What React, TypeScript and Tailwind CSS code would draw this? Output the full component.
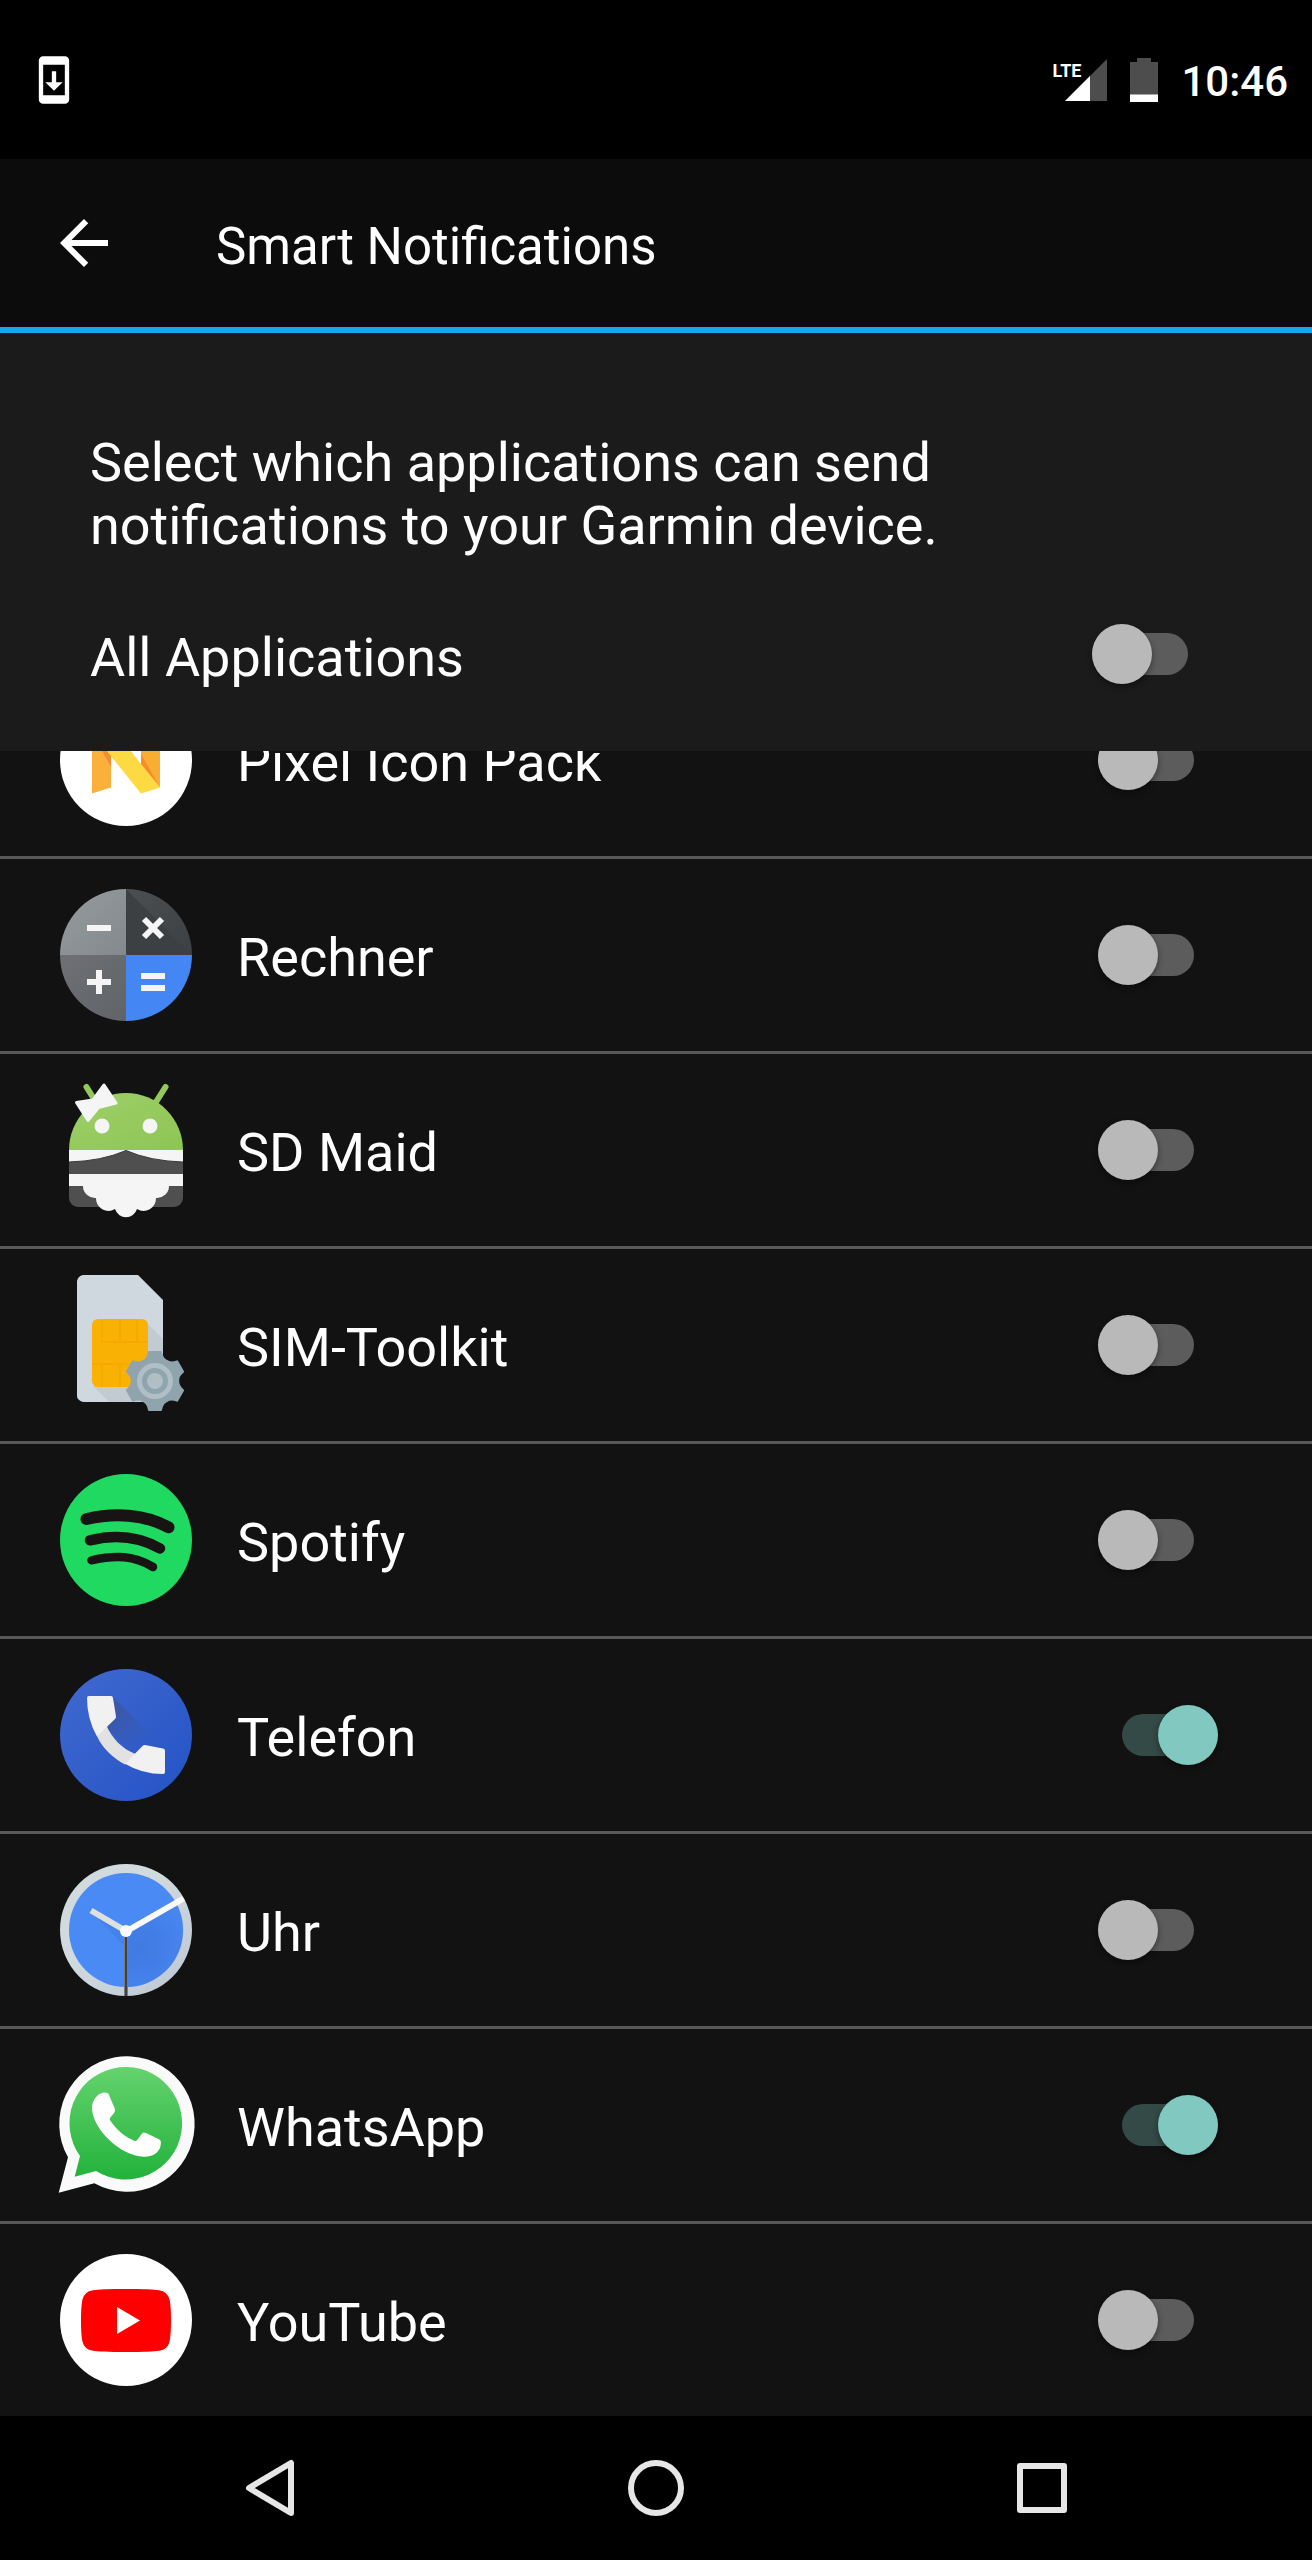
import { useLayoutEffect, useRef, useState } from 'react';
import type { ReactNode } from 'react';

interface AppEntry {
  id: string;
  name: string;
  enabled: boolean;
  icon: ReactNode;
}

function AppIcon({ children }: { children: ReactNode }) {
  return (
    <svg viewBox="0 0 132 132" className="size-[132px] shrink-0 overflow-visible" aria-hidden="true">
      {children}
    </svg>
  );
}

const pixelIcon = (
  <AppIcon>
    <circle cx="66" cy="66" r="66" fill="#fff" />
    <path d="M32 38.5 51 32.5V93.5L32 99.5Z" fill="#fbb03b" />
    <path d="M81 38.5 100 32.5V93.5L81 70Z" fill="#f9ae33" />
    <path d="M32 38.5 51 73V58Z" fill="#f78b2d" />
    <path d="M81 60 100 93.5 81 71Z" fill="#f78b2d" />
    <path d="M32 38.5 51 32.5 100 93.5 81 99.5Z" fill="#fdd942" />
  </AppIcon>
);

const calculatorIcon = (
  <AppIcon>
    <defs>
      <clipPath id="calc-clip">
        <circle cx="66" cy="66" r="66" />
      </clipPath>
      <linearGradient id="calc-minus" x1="0" y1="0" x2="1" y2="1">
        <stop offset="0" stopColor="#969b9e" />
        <stop offset="1" stopColor="#84898d" />
      </linearGradient>
      <linearGradient id="calc-plus" x1="0" y1="0" x2="1" y2="1">
        <stop offset="0" stopColor="#6e7074" />
        <stop offset="1" stopColor="#606367" />
      </linearGradient>
      <linearGradient id="calc-times" x1="0" y1="0" x2="1" y2="1">
        <stop offset="0" stopColor="#4c4f51" />
        <stop offset="1" stopColor="#3c4043" />
      </linearGradient>
    </defs>
    <g clipPath="url(#calc-clip)">
      <rect width="66" height="66" fill="url(#calc-minus)" />
      <rect x="66" width="66" height="66" fill="url(#calc-times)" />
      <path d="M66 0 132 66H66Z" fill="#3c4042" />
      <rect y="66" width="66" height="66" fill="url(#calc-plus)" />
      <rect x="66" y="66" width="66" height="66" fill="#4486f4" />
    </g>
    <g fill="#f5f5f5">
      <rect x="27" y="36" width="24" height="6" />
      <rect x="27" y="90" width="24" height="6" />
      <rect x="36" y="81" width="6" height="24" />
      <rect x="81" y="84" width="24" height="6" />
      <rect x="81" y="96" width="24" height="6" />
    </g>
    <path d="M84 30 102 48M102 30 84 48" stroke="#f5f5f5" strokeWidth="6" />
  </AppIcon>
);

const sdMaidIcon = (
  <AppIcon>
    <defs>
      <linearGradient id="maid-head" x1="0" y1="0" x2="1" y2="1">
        <stop offset="0" stopColor="#9fcf6b" />
        <stop offset="1" stopColor="#8dc653" />
      </linearGradient>
    </defs>
    <path d="M26.5 3 34 15M105.5 3 96 18" stroke="#93c95b" strokeWidth="6" strokeLinecap="round" />
    <path d="M9 66A57 57 0 0 1 123 66Z" fill="url(#maid-head)" />
    <path d="M9 66H123V114A9 9 0 0 1 114 123H18A9 9 0 0 1 9 114Z" fill="#4f4f4f" />
    <path d="M9 66H123V78Q90 77 66 66.5 42 77 9 78Z" fill="#f5f5f5" />
    <path d="M9 78Q42 77 66 66.5 90 77 123 78" fill="none" stroke="#3b3b3b" strokeWidth="1" />
    <path
      d="M9 90H123V102H109A12 12 0 0 1 96 114A12.500 12.500 0 0 1 77 125A11.500 11.500 0 0 1 55 125A12.500 12.500 0 0 1 36 114A12 12 0 0 1 23 102H9Z"
      fill="#f5f5f5"
    />
    <circle cx="42" cy="42" r="7.5" fill="#f5f5f5" />
    <circle cx="90" cy="42" r="7.5" fill="#f5f5f5" />
    <path
      d="M44 1 56 19 38.5 23.5 28 36.500 16.500 18.500 33 16Z"
      fill="#f5f5f5"
      stroke="#f5f5f5"
      strokeWidth="3"
      strokeLinejoin="round"
    />
  </AppIcon>
);

const simIcon = (
  <AppIcon>
    <path d="M23 -4H78L103 21V123H23Q17 121 17 117V2Q18 -3 23 -4Z" fill="#cfd8de" />
    <path d="M88 45 103 60V123H49L33 107H88Z" fill="#c2cbd1" />
    <rect x="32" y="40" width="56" height="68" rx="6" fill="#f9b104" />
    <path d="M42 41V63H88M60 41V63M77 41V63M32 85H88M42 85V108M60 85V108" fill="none" stroke="#f6a900" strokeWidth="2" />
    <g transform="translate(95 102)">
      <circle r="24" fill="#90a4ae" />
      {[0, 60, 120, 180, 240, 300].map((angle) => (
        <path
          key={angle}
          d="M-12 -21Q-8 -23 -7 -29Q-7 -30 -6 -30H6Q7 -30 7 -29Q8 -23 12 -21L8 -14H-8Z"
          fill="#90a4ae"
          transform={`rotate(${angle})`}
        />
      ))}
      <circle r="15.500" fill="none" stroke="#b0bec5" strokeWidth="5" />
      <circle r="8" fill="#b0bec5" />
    </g>
  </AppIcon>
);

const spotifyIcon = (
  <AppIcon>
    <circle cx="66" cy="66" r="66" fill="#1fd961" />
    <g fill="none" stroke="#191414" strokeLinecap="round">
      <path d="M26.500 45C54 38.500 84 40 108.500 53.300" strokeWidth="12" />
      <path d="M30 66.300C54 60.500 79 62.500 100 74.500" strokeWidth="10.500" />
      <path d="M31.500 86.300C56 81 74 81.500 93 93" strokeWidth="8.500" />
    </g>
  </AppIcon>
);

const phoneIcon = (
  <AppIcon>
    <defs>
      <linearGradient id="phone-bg" x1="0" y1="0" x2="1" y2="1">
        <stop offset="0" stopColor="#4169cf" />
        <stop offset="1" stopColor="#2453c6" />
      </linearGradient>
      <linearGradient id="phone-shade" x1="0.2" y1="0.2" x2="0.7" y2="0.7">
        <stop offset="0" stopColor="#3a58a8" />
        <stop offset="1" stopColor="#3a58a8" stopOpacity="0" />
      </linearGradient>
    </defs>
    <circle cx="66" cy="66" r="66" fill="url(#phone-bg)" />
    <path d="M53 28 105 80 75 86 46 58Z" fill="url(#phone-shade)" />
    <path d="M46.700 57C52 69 62 80 75.500 85L65 95.500C53 89 42 79 37 67Z" fill="#e2e2e2" />
    <path d="M29 27H51Q52.700 27 53 29L56 47.500Q56 49 55 50L37 67.500Q27 50 27 29 27 27 29 27Z" fill="#f1f1f1" />
    <path d="M105 103V81.500Q105 80 103 79.500L85 76Q83.500 75.800 82.500 77L65 94.700Q82 105 103 105 105 105 105 103Z" fill="#f1f1f1" />
  </AppIcon>
);

const clockIcon = (
  <AppIcon>
    <defs>
      <linearGradient id="clock-rim" x1="0" y1="0" x2="1" y2="1">
        <stop offset="0.4" stopColor="#d1dadd" />
        <stop offset="0.9" stopColor="#bfcad6" />
      </linearGradient>
      <radialGradient id="clock-shade" gradientUnits="userSpaceOnUse" cx="80" cy="84" r="56">
        <stop offset="0" stopColor="#4079e2" />
        <stop offset="1" stopColor="#4079e2" stopOpacity="0.2" />
      </radialGradient>
    </defs>
    <circle cx="66" cy="66" r="66" fill="url(#clock-rim)" />
    <circle cx="66" cy="66" r="57" fill="#4a8af5" />
    <path d="M66 67 116 38A57 57 0 0 1 66 123Z" fill="url(#clock-shade)" />
    <path d="M32 48 66 84V67Z" fill="#4682ec" />
    <path d="M31 46.500 66 67" stroke="#e0e0e0" strokeWidth="6" />
    <path d="M66 67.500 123.500 34.500" stroke="#fafafa" strokeWidth="6" />
    <path d="M66 73V132" stroke="#757b83" strokeWidth="4" />
    <path d="M66 73V132" stroke="#424242" strokeWidth="2" />
    <circle cx="66" cy="67" r="6" fill="#fafafa" />
  </AppIcon>
);

const whatsAppIcon = (
  <AppIcon>
    <defs>
      <linearGradient id="wa-bg" x1="0" y1="0" x2="0" y2="1">
        <stop offset="0" stopColor="#65d36e" />
        <stop offset="1" stopColor="#22b23b" />
      </linearGradient>
    </defs>
    <path d="M8 98.300A67.700 67.700 0 1 1 34.300 124.300L-1.300 133.700Z" fill="#fafafa" />
    <path d="M20 97A56.300 56.300 0 1 1 36 112L14.700 117.700Z" fill="url(#wa-bg)" />
    <path
      d="M43 33.700C36 35 31.500 43 32 50C33 70 60 97 84 97.800C92 98 99 94 100.500 87C101.200 83 101.200 81.500 99 80.200L86 74C84 73 83 73.300 82 74.500L77.500 80.500C76 82.300 75 82.500 73 81.300C64 77 57 71 50.500 62C49.300 60.200 49.500 59.500 50.800 58L54 54C55.300 52 55.200 51 54.500 49L49 36C48 34 46.500 33.300 43 33.700Z"
      fill="#fff"
    />
  </AppIcon>
);

const youTubeIcon = (
  <AppIcon>
    <circle cx="66" cy="66" r="66" fill="#fff" />
    <path
      d="M66 35C84 35 94 35.300 99 36.200Q108 37.500 109.700 46C110.700 52 111 58 111 66.500S110.700 81 109.700 87Q108 95.500 99 96.800C94 97.700 84 98 66 98S38 97.700 33 96.800Q24 95.500 22.300 87C21.300 81 21 75 21 66.500S21.300 52 22.300 46Q24 37.500 33 36.200C38 35.300 48 35 66 35Z"
      fill="#f00"
    />
    <path d="M57 53 80 66.500 57 80Z" fill="#fff" />
  </AppIcon>
);

const initialApps: AppEntry[] = [
  { id: 'pixel', name: 'Pixel Icon Pack', enabled: false, icon: pixelIcon },
  { id: 'rechner', name: 'Rechner', enabled: false, icon: calculatorIcon },
  { id: 'sdmaid', name: 'SD Maid', enabled: false, icon: sdMaidIcon },
  { id: 'sim', name: 'SIM-Toolkit', enabled: false, icon: simIcon },
  { id: 'spotify', name: 'Spotify', enabled: false, icon: spotifyIcon },
  { id: 'telefon', name: 'Telefon', enabled: true, icon: phoneIcon },
  { id: 'uhr', name: 'Uhr', enabled: false, icon: clockIcon },
  { id: 'whatsapp', name: 'WhatsApp', enabled: true, icon: whatsAppIcon },
  { id: 'youtube', name: 'YouTube', enabled: false, icon: youTubeIcon },
];

interface SwitchProps {
  id: string;
  checked: boolean;
  onChange: (checked: boolean) => void;
}

function Switch({ id, checked, onChange }: SwitchProps) {
  return (
    <input
      id={id}
      type="checkbox"
      role="switch"
      checked={checked}
      onChange={(e) => onChange(e.target.checked)}
      className="mr-6 h-[42px] w-24 shrink-0 appearance-none rounded-full bg-[#5c5c5c] before:-mt-[9px] before:block before:size-[60px] before:rounded-full before:bg-[#b9b9b9] before:shadow-[0_3px_6px_rgba(0,0,0,0.4)] checked:mr-0 checked:ml-6 checked:bg-[#344a47] checked:before:ml-9 checked:before:bg-[#80c8c0]"
    />
  );
}

function StatusBar() {
  return (
    <div className="flex h-[159px] shrink-0 items-center justify-between bg-black pr-6 pl-7">
      <svg viewBox="0 0 24 24" className="size-[52px]" fill="#fff" aria-hidden="true">
        <path d="M17 1H7a2 2 0 0 0-2 2v18a2 2 0 0 0 2 2h10a2 2 0 0 0 2-2V3a2 2 0 0 0-2-2zm0 18H7V5h10v14zm-1-6h-3V8h-2v5H8l4 4 4-4z" />
      </svg>
      <div className="flex items-center gap-[23px]">
        <div className="flex">
          <span className="-mr-4 text-[18px] leading-[24px] font-bold text-white">LTE</span>
          <svg viewBox="0 0 42 42" className="size-[42px]" aria-hidden="true">
            <path d="M42 0V42H0Z" fill="#4d4d4d" />
            <path d="M25 17V42H0Z" fill="#fff" />
          </svg>
        </div>
        <svg viewBox="0 0 28 44" className="h-11 w-7" aria-hidden="true">
          <path d="M7 0H21V4H28V44H0V4H7Z" fill="#4d4d4d" />
          <path d="M0 36.500H28V44H0Z" fill="#fff" />
        </svg>
        <span className="pt-1 text-[42px] leading-[50px] font-medium text-white">10:46</span>
      </div>
    </div>
  );
}

function NavBar() {
  return (
    <nav className="flex h-36 shrink-0 items-center bg-black px-[77px]">
      <button type="button" aria-label="Back" className="flex flex-1 justify-center">
        <svg viewBox="0 0 60 60" className="size-[60px]" fill="none" stroke="#e6e6e6" strokeWidth="6" strokeLinejoin="round">
          <path d="M51 5V55L9 30Z" />
        </svg>
      </button>
      <button type="button" aria-label="Home" className="flex flex-1 justify-center">
        <svg viewBox="0 0 60 60" className="size-[60px]" fill="none" stroke="#e6e6e6" strokeWidth="6">
          <circle cx="30" cy="30" r="25" />
        </svg>
      </button>
      <button type="button" aria-label="Overview" className="flex flex-1 justify-center">
        <svg viewBox="0 0 60 60" className="size-[60px]" fill="none" stroke="#e6e6e6" strokeWidth="6" strokeLinejoin="round">
          <path d="M8 8H52V52H8Z" />
        </svg>
      </button>
    </nav>
  );
}

export default function App() {
  const [apps, setApps] = useState(initialApps);
  const listRef = useRef<HTMLUListElement>(null);

  // Open at the end of the list
  useLayoutEffect(() => {
    if (listRef.current) {
      listRef.current.scrollTop = listRef.current.scrollHeight;
    }
  }, []);

  const toggleApp = (id: string, enabled: boolean) => {
    setApps(apps.map((app) => (app.id === id ? { ...app, enabled } : app)));
  };

  const toggleAll = (enabled: boolean) => {
    setApps(apps.map((app) => ({ ...app, enabled })));
  };

  return (
    <div className="flex h-screen flex-col bg-[#121212] font-['Roboto',sans-serif] text-[54px] leading-[63px] text-white">
      <StatusBar />

      <header className="flex h-[174px] shrink-0 items-center border-b-6 border-[#11a8ed] bg-[#0c0c0c] pl-12">
        <button type="button" aria-label="Navigate up">
          <svg viewBox="0 0 24 24" className="size-[72px]" fill="#fff">
            <path d="M20 11H7.830l5.590-5.590L12 4l-8 8 8 8 1.410-1.410L7.830 13H20v-2z" />
          </svg>
        </button>
        <h1 className="ml-24 pt-1.5 text-[51px]">Smart Notifications</h1>
      </header>

      <section className="shrink-0 bg-[#1b1b1b] pt-[98px] pr-[100px] pl-[90px]">
        <p className="max-w-[900px]">
          Select which applications can send notifications to your Garmin device.
        </p>
        <div className="flex h-[194px] items-center justify-between">
          <label htmlFor="all-apps" className="pt-1.5">All Applications</label>
          <Switch id="all-apps" checked={apps.every((app) => app.enabled)} onChange={toggleAll} />
        </div>
      </section>

      <ul ref={listRef} className="min-h-0 flex-1 divide-y-3 divide-[#585858] overflow-y-auto [scrollbar-width:none]">
        {apps.map((app) => (
          <li key={app.id}>
            <div className="flex h-48 items-center pr-[94px] pl-[60px]">
              {app.icon}
              <label htmlFor={app.id} className="ml-[45px] flex-1 pt-1">{app.name}</label>
              <Switch id={app.id} checked={app.enabled} onChange={(enabled) => toggleApp(app.id, enabled)} />
            </div>
          </li>
        ))}
      </ul>

      <NavBar />
    </div>
  );
}
